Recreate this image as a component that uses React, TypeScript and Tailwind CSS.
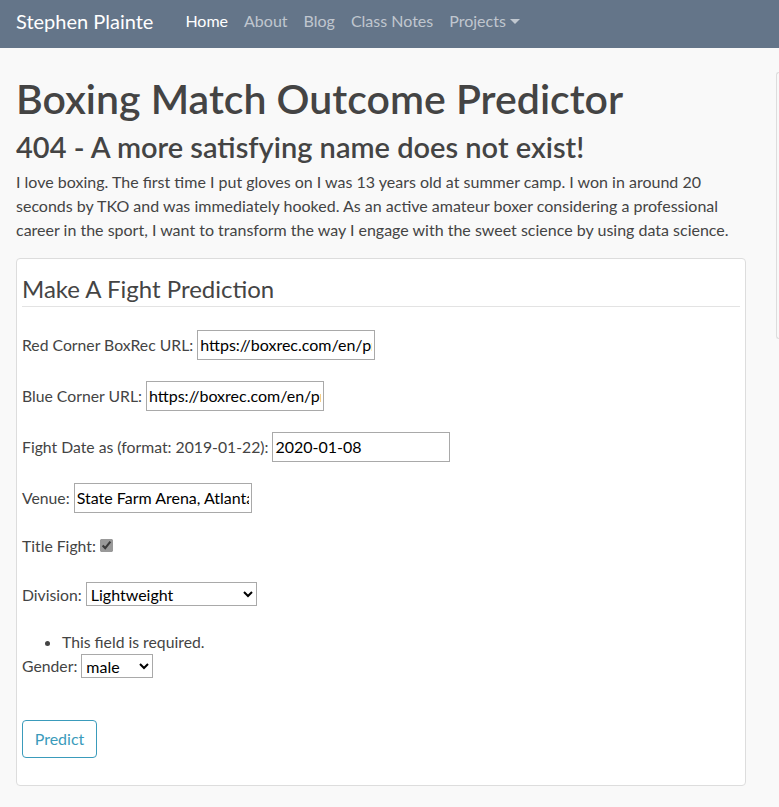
import { useState } from "react";

// Boxing predictor page — navbar, intro copy, prediction form card.

const font = "font-['Segoe_UI',Lato,sans-serif]";

function NavBar() {
  const links = ["Home", "About", "Blog", "Class Notes"];
  return (
    <nav className="flex h-12 items-center bg-[#647589] px-4 pb-1.5">
      <span className="mr-8 text-[20px] text-white">Stephen Plainte</span>
      <ul className="flex items-center gap-4 text-[16px]">
        {links.map((l, i) => (
          <li key={l} className={i === 0 ? "text-white" : "text-white/60"}>
            {l}
          </li>
        ))}
        <li className="flex items-center text-white/60">
          Projects
          <span className="ml-1 inline-block border-x-[5px] border-t-[5px] border-x-transparent border-t-white/60" />
        </li>
      </ul>
    </nav>
  );
}

function Row({ children, className = "" }: { children: React.ReactNode; className?: string }) {
  return <div className={`flex items-center text-[15.75px] ${className}`}>{children}</div>;
}

const inputCls =
  "h-[30px] w-[178px] border border-[#a9a9a9] bg-white px-[2px] text-[16px] text-black outline-none";

export default function App() {
  const [red, setRed] = useState("https://boxrec.com/en/proboxer/");
  const [blue, setBlue] = useState("https://boxrec.com/en/proboxer/");
  const [date, setDate] = useState("2020-01-08");
  const [venue, setVenue] = useState("State Farm Arena, Atlanta");

  return (
    <div className={`min-h-[807px] bg-[#f9f9f9] text-[#444] ${font}`}>
      <NavBar />
      <div className="flex">
        <main className="w-[776px] shrink-0 px-4 pt-[26px]">
          <h1 className="text-[41px] font-semibold leading-[1.2]">Boxing Match Outcome Predictor</h1>
          <h2 className="mt-[7px] text-[29px] font-semibold leading-[1.2]">
            404 - A more satisfying name does not exist!
          </h2>
          <p className="mt-[5px] text-[16px] leading-6">
            I love boxing. The first time I put gloves on I was 13 years old at summer camp. I won in around 20
            seconds by TKO and was immediately hooked. As an active amateur boxer considering a professional
            career in the sport, I want to transform the way I engage with the sweet science by using data science.
          </p>

          <section className="mt-[16px] w-[730px] rounded border border-[#ddd] bg-white px-[5px] pb-[27px]">
            <h3 className="mt-[16px] border-b border-[#e3e3e3] pb-[2px] text-[24px] font-normal leading-[1.2]">
              Make A Fight Prediction
            </h3>

            <Row className="mt-[23px]">
              <label>Red Corner BoxRec URL:</label>
              <input className={`ml-1 ${inputCls}`} value={red} onChange={(e) => setRed(e.target.value)} />
            </Row>
            <Row className="mt-[21px]">
              <label>Blue Corner URL:</label>
              <input className={`ml-1 ${inputCls}`} value={blue} onChange={(e) => setBlue(e.target.value)} />
            </Row>
            <Row className="mt-[21px]">
              <label>Fight Date as (format: 2019-01-22):</label>
              <input className={`ml-1 ${inputCls}`} value={date} onChange={(e) => setDate(e.target.value)} />
            </Row>
            <Row className="mt-[21px]">
              <label>Venue:</label>
              <input className={`ml-1 ${inputCls}`} value={venue} onChange={(e) => setVenue(e.target.value)} />
            </Row>
            <Row className="mt-[21px]">
              <label>Title Fight:</label>
              <input type="checkbox" defaultChecked className="ml-1 h-[13px] w-[13px] accent-[#999]" />
            </Row>
            <Row className="mt-[25px]">
              <label>Division:</label>
              <select
                defaultValue="Lightweight"
                className="ml-1 h-6 w-[171px] border border-[#a9a9a9] bg-white text-[16px] text-black"
              >
                <option>Lightweight</option>
                <option>Welterweight</option>
                <option>Heavyweight</option>
              </select>
            </Row>
            <ul className="mt-[24px] list-disc pl-10 text-[15.75px]">
              <li>This field is required.</li>
            </ul>
            <Row>
              <label>Gender:</label>
              <select
                defaultValue="male"
                className="ml-1 h-6 w-[72px] border border-[#a9a9a9] bg-white text-[16px] text-black"
              >
                <option>male</option>
                <option>female</option>
              </select>
            </Row>

            <button className="mt-[42px] h-[38px] w-[75px] rounded border border-[#3a9bbb] text-[16px] text-[#3a9bbb]">
              Predict
            </button>
          </section>
        </main>
        <aside className="mt-[24px] h-[267px] flex-1 rounded-l border-y border-l border-[#ddd] bg-[#f9f9f9]" />
      </div>
    </div>
  );
}
